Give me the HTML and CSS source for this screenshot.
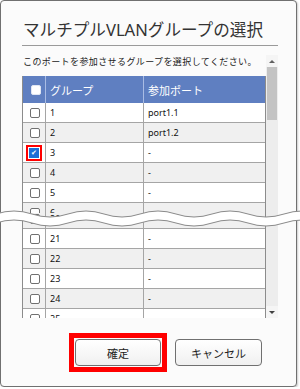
FILE: index.html
```html
<!DOCTYPE html>
<html lang="ja">
<head>
    <meta charset="UTF-8">
    <meta name="viewport" content="width=device-width, initial-scale=1.0">
    <title>マルチプルVLANグループの選択</title>
    <link rel="stylesheet" href="styles.css">
</head>
<body>
    <div class="dialog">
        <h1 class="title">マルチプルVLANグループの選択</h1>

        <div class="scroll-area">
            <div class="scroll-content">
                <p class="hint">このポートを参加させるグループを選択してください。</p>

                <div class="group-table">
                    <div class="row head">
                        <div class="cell"><span class="box head-box"></span></div>
                        <div class="cell">グループ</div>
                        <div class="cell">参加ポート</div>
                    </div>
                    <div class="row">
                        <div class="cell"><span class="box"></span></div>
                        <div class="cell">1</div>
                        <div class="cell">port1.1</div>
                    </div>
                    <div class="row even">
                        <div class="cell"><span class="box"></span></div>
                        <div class="cell">2</div>
                        <div class="cell">port1.2</div>
                    </div>
                    <div class="row">
                        <div class="cell"><span class="mark"><span class="box checked">&#10004;</span></span></div>
                        <div class="cell">3</div>
                        <div class="cell">-</div>
                    </div>
                    <div class="row even">
                        <div class="cell"><span class="box"></span></div>
                        <div class="cell">4</div>
                        <div class="cell">-</div>
                    </div>
                    <div class="row">
                        <div class="cell"><span class="box"></span></div>
                        <div class="cell">5</div>
                        <div class="cell">-</div>
                    </div>
                    <!-- rows 6 .. 20 are cut out of the screenshot -->
                    <div class="row even cut-top">
                        <div class="cell"><span class="box"></span></div>
                        <div class="cell">6</div>
                        <div class="cell">-</div>
                    </div>
                    <div class="cut-bottom">
                        <div class="row even">
                            <div class="cell"><span class="box"></span></div>
                            <div class="cell">20</div>
                            <div class="cell">-</div>
                        </div>
                    </div>
                    <div class="row">
                        <div class="cell"><span class="box"></span></div>
                        <div class="cell">21</div>
                        <div class="cell">-</div>
                    </div>
                    <div class="row even">
                        <div class="cell"><span class="box"></span></div>
                        <div class="cell">22</div>
                        <div class="cell">-</div>
                    </div>
                    <div class="row">
                        <div class="cell"><span class="box"></span></div>
                        <div class="cell">23</div>
                        <div class="cell">-</div>
                    </div>
                    <div class="row even">
                        <div class="cell"><span class="box"></span></div>
                        <div class="cell">24</div>
                        <div class="cell">-</div>
                    </div>
                    <div class="row">
                        <div class="cell"><span class="box"></span></div>
                        <div class="cell">25</div>
                        <div class="cell">-</div>
                    </div>
                </div>
            </div>

            <div class="scrollbar">
                <div class="sb-btn sb-up"></div>
                <div class="sb-thumb"></div>
                <div class="sb-track"></div>
                <div class="sb-btn sb-down"></div>
            </div>
        </div>

        <div class="actions">
            <span class="btn-mark"><button class="btn btn-ok">確定</button></span>
            <button class="btn btn-cancel">キャンセル</button>
        </div>
    </div>

    <!-- wavy "omitted" mark drawn over the screenshot -->
    <svg class="break-mark" width="300" height="26" viewBox="0 205 300 26">
        <path d="M -40 218.5 Q -22 224.5 -4 218.5 T 32 218.5 T 68 218.5 T 104 218.5 T 140 218.5 T 176 218.5 T 212 218.5 T 248 218.5 T 284 218.5 T 320 218.5 T 356 218.5"
              fill="none" stroke="#fff" stroke-width="9"/>
        <path d="M -40 214 Q -22 220 -4 214 T 32 214 T 68 214 T 104 214 T 140 214 T 176 214 T 212 214 T 248 214 T 284 214 T 320 214 T 356 214"
              fill="none" stroke="#8a8a8a" stroke-width="1"/>
        <path d="M -40 223 Q -22 229 -4 223 T 32 223 T 68 223 T 104 223 T 140 223 T 176 223 T 212 223 T 248 223 T 284 223 T 320 223 T 356 223"
              fill="none" stroke="#8a8a8a" stroke-width="1"/>
    </svg>
</body>
</html>
```

FILE: styles.css
```css
body {
    margin: 0;
    background: #fff;
    font-family: 'Noto Sans', 'Noto Sans CJK JP', sans-serif;
    color: #222;
}

.dialog {
    width: 297px;
    height: 387px;
    box-sizing: border-box;
    border: 1px solid #707070;
    border-radius: 4px;
    background: #fbfbfb;
    box-shadow: 1px 1px 2px rgba(0,0,0,0.2);
    padding-left: 21px;
}

.title {
    width: 255px;
    margin: 0;
    padding: 17px 0 3px 1px;
    font-size: 16.6px;
    font-weight: normal;
    line-height: 24px;
    color: #333;
    border-bottom: 1px solid #9a9a9a;
}

.scroll-area {
    display: flex;
    width: 256px;
    height: 263px;
    margin-top: 9px;
}

.scroll-content {
    width: 244px;
    overflow: hidden;
}

.hint {
    margin: 0 0 7px 1px;
    font-size: 9px;
    letter-spacing: 0.4px;
    line-height: 14px;
    white-space: nowrap;
    color: #222;
}

.group-table {
    border-left: 1px solid #8c8c8c;
    border-right: 1px solid #8c8c8c;
}

.row {
    display: grid;
    grid-template-columns: 23px 98px 1fr;
    height: 20px;
    box-sizing: border-box;
    border-bottom: 1px solid #a5a5a5;
    background: #fff;
    font-size: 9px;
    color: #111;
}

.row.even {
    background: #f0f0f0;
}

.cell {
    display: flex;
    align-items: center;
    padding-left: 4px;
    border-right: 1px solid #a5a5a5;
}

.cell:first-child {
    padding-left: 7px;
}

.cell:last-child {
    border-right: none;
}

.row.head {
    height: 27px;
    background: #5f7fc1;
    color: #fff;
    font-size: 11px;
    border-bottom: none;
}

.row.head .cell {
    border-right-color: #a9bce4;
}

.row.head .cell:first-child {
    padding-left: 8px;
}

.row.cut-top {
    height: 10px;
    overflow: hidden;
    grid-template-rows: 19px;
    border-bottom: none;
}

.cut-bottom {
    height: 16px;
    overflow: hidden;
}

.cut-bottom .row {
    margin-top: -4px;
}

.box {
    width: 8px;
    height: 8px;
    border: 1px solid #707070;
    border-radius: 2px;
    background: #fff;
}

.head-box {
    border-color: #e0e6f2;
}

.mark {
    display: flex;
    margin-left: -4px;
    padding: 1px;
    border: 2px solid #f00;
}

.box.checked {
    display: flex;
    align-items: center;
    justify-content: center;
    background: #1d6fd6;
    border-color: #1d6fd6;
    border-radius: 0;
    color: #fff;
    font-size: 7px;
    line-height: 1;
}

.scrollbar {
    display: flex;
    flex-direction: column;
    width: 12px;
    background: #ededed;
}

.sb-btn {
    height: 12px;
    display: flex;
    align-items: center;
    justify-content: center;
    background: #f5f5f5;
}

.sb-up::before,
.sb-down::before {
    content: '';
    border-left: 3px solid transparent;
    border-right: 3px solid transparent;
}

.sb-up::before {
    border-bottom: 3px solid #606060;
}

.sb-down::before {
    border-top: 3px solid #404040;
}

.sb-thumb {
    height: 53px;
    margin: 0 1px;
    background: #c3c3c3;
}

.sb-track {
    flex: 1;
}

.actions {
    display: flex;
    align-items: center;
    gap: 8px;
    margin-top: 15px;
    padding-left: 47px;
}

.btn-mark {
    display: flex;
    padding: 1px;
    border: 5px solid #f00;
}

.btn {
    height: 27px;
    width: 86px;
    border: 1px solid #707070;
    border-radius: 4px;
    background: linear-gradient(#ffffff, #f0f0f0);
    font-family: 'Noto Sans', 'Noto Sans CJK JP', sans-serif;
    font-size: 11px;
    color: #222;
    padding: 0;
}

.btn-cancel {
    width: 87px;
}

.break-mark {
    position: absolute;
    left: 0;
    top: 205px;
}
```
